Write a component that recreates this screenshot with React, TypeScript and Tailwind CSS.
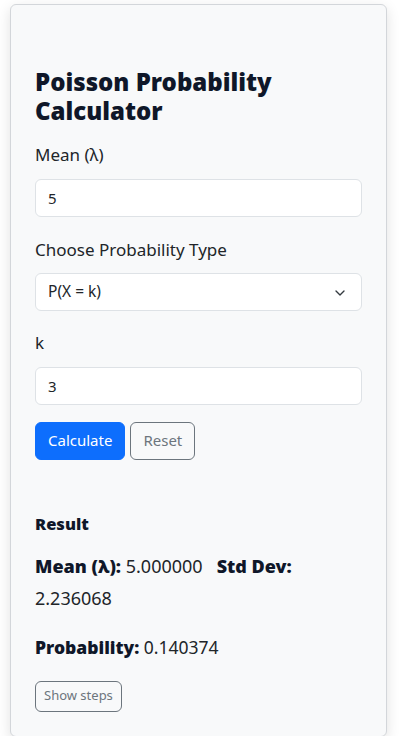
import { ChevronDown } from "lucide-react";

export default function App() {
    return (
        <div className="min-h-[736px] bg-white pt-1 px-[10px] font-['Noto_Sans',sans-serif] text-[#212529]">
            <div className="w-[377px] border border-[#d3d6da] rounded-md bg-[#f8f9fa] shadow-[0_4px_14px_rgba(0,0,0,0.12)] px-6 pt-[63px] pb-6">
                <h2 className="text-[24px] leading-[28.8px] font-black text-[#0f1729] mb-[17px]">
                    Poisson Probability Calculator
                </h2>

                {/* Mean */}
                <label className="block text-[17px] leading-6 mb-3">Mean (λ)</label>
                <input
                    type="text"
                    defaultValue="5"
                    className="block w-full h-[38px] px-3 bg-white border border-[#dee2e6] rounded-md text-[15px] outline-none"
                />

                {/* Probability type */}
                <label className="block text-[17px] leading-6 mt-[21px] mb-[11px]">Choose Probability Type</label>
                <div className="relative h-[38px] bg-white border border-[#dee2e6] rounded-md flex items-center px-3 text-[15.5px]">
                    <span>P(X = k)</span>
                    <ChevronDown className="absolute right-[13px] top-[11px] w-4 h-4 text-[#343a40]" strokeWidth={2} />
                </div>

                {/* k */}
                <label className="block text-[17px] leading-6 mt-5 mb-3">k</label>
                <input
                    type="text"
                    defaultValue="3"
                    className="block w-full h-[38px] px-3 bg-white border border-[#dee2e6] rounded-md text-[15px] outline-none"
                />

                <div className="flex gap-[5px] mt-[17px]">
                    <button className="h-[38px] px-3 rounded-md bg-[#0d6efd] border border-[#0d6efd] text-white text-[15px]">Calculate</button>
                    <button className="h-[38px] px-3 rounded-md border border-[#6c757d] text-[#6c757d] text-[15px]">Reset</button>
                </div>

                {/* Result */}
                <h5 className="mt-[52px] text-[16.5px] leading-6 font-black text-[#0f1729]">Result</h5>
                <p className="mt-[14px] text-[18px] leading-8">
                    <b className="font-black text-[#0f1729]">Mean (λ):</b> 5.000000 &nbsp;&nbsp;<b className="font-black text-[#0f1729]">Std Dev:</b> 2.236068
                </p>
                <p className="mt-[17px] text-[17.5px] leading-8">
                    <b className="font-black text-[#0f1729]">Probability:</b> 0.140374
                </p>
                <button className="mt-[18px] h-[31px] px-2 rounded-md border border-[#6c757d] text-[#6c757d] text-[13px]">Show steps</button>
            </div>
        </div>
    );
}
